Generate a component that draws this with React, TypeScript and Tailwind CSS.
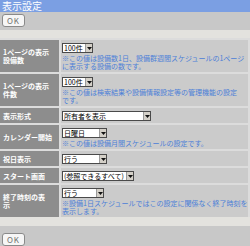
const OkButton = () => (
  <div className="flex h-[13px] w-[23px] items-center justify-center rounded-[3px] border border-[#8a8a8a] bg-[#f6f6f6] text-[8px] leading-[8px] tracking-[1px] text-[#707070]">
    OK
  </div>
);

const Select = ({ label, width }: { label: string; width: string }) => (
  <div className={`flex h-[10px] ${width} border border-[#4a4a4a] bg-white`}>
    <span className="flex-1 overflow-hidden whitespace-nowrap pl-[1px] text-[7px] leading-[8px] text-black">
      {label}
    </span>
    <span className="flex w-[7px] items-center justify-center border-l border-[#9a9a9a] bg-[#d4d0c8]">
      <svg width="5" height="3" viewBox="0 0 5 3">
        <path d="M0 0h5L2.5 3z" fill="#111" />
      </svg>
    </span>
  </div>
);

const Note = ({ lines }: { lines: string[] }) => (
  <div className="mt-[1px] whitespace-nowrap text-[7px] leading-[8px] text-[#4c80d8]">
    {lines.map((l) => (
      <div key={l}>{l}</div>
    ))}
  </div>
);

const rows = [
  {
    label: ["1ページの表示", "設備数"],
    select: "100件",
    width: "w-[31px]",
    note: ["※この値は設備数1日、設備群週間スケジュールの1ページ", "に表示する設備の数です。"],
  },
  {
    label: ["1ページの表示", "件数"],
    select: "100件",
    width: "w-[31px]",
    note: ["※この値は検索結果や設備情報設定等の管理機能の設定", "です。"],
  },
  { label: ["表示形式"], select: "所有者を表示", width: "w-[89px]", note: [] },
  {
    label: ["カレンダー開始"],
    select: "日曜日",
    width: "w-[45px]",
    note: ["※この値は設備月間スケジュールの設定です。"],
  },
  { label: ["祝日表示"], select: "行う", width: "w-[45px]", note: [] },
  { label: ["スタート画面"], select: "(参照できるすべて)", width: "w-[72px]", note: [] },
  {
    label: ["終了時刻の表", "示"],
    select: "行う",
    width: "w-[42px]",
    note: ["※設備1日スケジュールではこの設定に関係なく終了時刻を", "表示します。"],
  },
];

export default function App() {
  return (
    <div className="h-[246px] w-[250px] overflow-hidden bg-[#c8c8c8] font-['Noto_Sans_CJK_JP',sans-serif]">
      <div className="h-[12px] bg-[#7b9fe3] pl-[2px] text-[10px] leading-[12px] text-white">表示設定</div>
      <div className="h-[18px] pl-[2px] pt-[2px]">
        <OkButton />
      </div>
      <div className="h-[8px] bg-[#e3e2de]" />
      <div className="grid grid-cols-[59px_1fr] gap-[2px] bg-[#dcdcdc] pr-[2px] pt-[2px]">
        {rows.map((r) => (
          <>
            <div className="flex items-center bg-[#8d8d8d] pl-[3px] text-[7px] font-bold leading-[8px] text-white">
              <div className="whitespace-nowrap">
                {r.label.map((l) => (
                  <div key={l}>{l}</div>
                ))}
              </div>
            </div>
            <div className="overflow-hidden bg-[#cbcbcb] pb-[2px] pl-[1px] pt-[3px]">
              <Select label={r.select} width={r.width} />
              {r.note.length > 0 && <Note lines={r.note} />}
            </div>
          </>
        ))}
      </div>
      <div className="h-[9px] bg-[#e3e2de]" />
      <div className="pl-[2px] pt-[7px]">
        <OkButton />
      </div>
    </div>
  );
}
